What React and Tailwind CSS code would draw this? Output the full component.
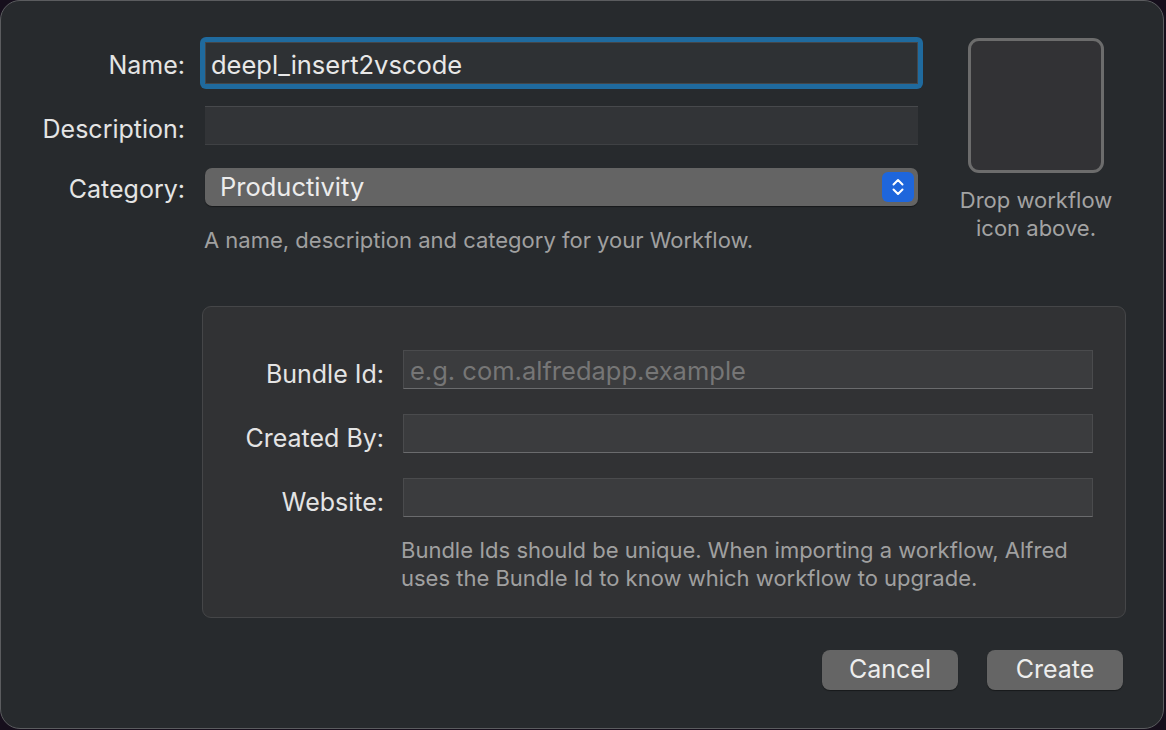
export default function App() {
  const font = { fontFamily: 'Inter, "Liberation Sans", sans-serif' }
  return (
    <div className="w-[1166px] h-[730px] bg-[#160f1c] overflow-hidden" style={font}>
      <div className="w-[1164px] h-[729px] rounded-[20px] border border-[#5b5c5f] bg-[#272a2d] flex flex-col">
        {/* top section */}
        <div className="flex pt-[36px]">
          <div className="flex flex-col w-[922px]">
            {/* Name */}
            <div className="flex items-center h-[52px]">
              <div className="w-[185px] text-right text-[25px] text-[#e4e4e4] pr-[1px] pt-[6px]">Name:</div>
              <div className="ml-[14px] w-[723px] h-[52px] rounded-[6px] bg-[#1f6a9e] p-[5px]">
                <div className="h-full bg-[#2e3134] border border-[#44474a] flex items-center pl-[5px] pt-[4px] text-[25.5px] text-[#e8e8e8]">
                  deepl_insert2vscode
                </div>
              </div>
            </div>
            {/* Description */}
            <div className="flex items-center mt-[17px] h-[39px]">
              <div className="w-[185px] text-right text-[25px] text-[#e4e4e4] pr-[1px] pt-[8px] whitespace-nowrap">Description:</div>
              <div className="ml-[19px] w-[713px] h-[39px] bg-[#323437] border-t border-[#47494c] border-b border-b-[#3f4144]" />
            </div>
            {/* Category */}
            <div className="flex items-center mt-[23px] h-[38px]">
              <div className="w-[185px] text-right text-[25px] text-[#e4e4e4] pr-[1px] pt-[5px]">Category:</div>
              <div className="ml-[19px] w-[713px] h-[38px] rounded-[7px] bg-[#646464] flex items-center justify-between pl-[15px] pr-[4px] shadow-[0_1px_1px_rgba(0,0,0,0.4)]">
                <span className="text-[25.5px] text-[#ececec]">Productivity</span>
                <div className="w-[32px] h-[30px] rounded-[6px] bg-[#1e66dc] flex items-center justify-center">
                  <svg width="14" height="20" viewBox="0 0 14 20" fill="none" stroke="#ffffff" strokeWidth="2" strokeLinecap="round" strokeLinejoin="round">
                    <path d="M2.5 7.5 L7 3 L11.5 7.5" />
                    <path d="M2.5 12.5 L7 17 L11.5 12.5" />
                  </svg>
                </div>
              </div>
            </div>
            <div className="ml-[203px] mt-[18px] text-[22px] text-[#a0a0a0] whitespace-nowrap">
              A name, description and category for your Workflow.
            </div>
          </div>
          {/* icon well */}
          <div className="ml-[45px] flex flex-col items-center w-[136px] pt-[1px]">
            <div className="w-[136px] h-[135px] rounded-[11px] border-[3px] border-[#6c6c6c] bg-[#323235]" />
            <div className="mt-[13px] text-[22px] leading-[28px] text-[#a3a3a3] text-center whitespace-nowrap">
              Drop workflow
              <br />
              icon above.
            </div>
          </div>
        </div>

        {/* bundle box */}
        <div className="ml-[201px] mt-[49px] w-[924px] h-[312px] rounded-[9px] border border-[#454648] bg-[#313234] flex flex-col pt-[43px]">
          {[
            ['Bundle Id:', 'e.g. com.alfredapp.example'],
            ['Created By:', ''],
            ['Website:', ''],
          ].map(([label, ph], i) => (
            <div key={label} className={`flex items-center h-[39px] ${i > 0 ? 'mt-[25px]' : ''}`}>
              <div className="w-[181px] text-right text-[25px] text-[#e4e4e4] pt-[10px] whitespace-nowrap">{label}</div>
              <div className="ml-[19px] w-[690px] h-[39px] bg-[#3b3c3e] border border-[#4a4b4d] border-b-[#6a6b6d] flex items-center pl-[6px] pt-[4px] text-[25.5px] text-[#767676]">
                {ph}
              </div>
            </div>
          ))}
          <div className="ml-[198px] mt-[19px] text-[22px] leading-[28px] text-[#a0a0a0] whitespace-nowrap">
            Bundle Ids should be unique. When importing a workflow, Alfred
            <br />
            uses the Bundle Id to know which workflow to upgrade.
          </div>
        </div>

        {/* buttons */}
        <div className="flex justify-end gap-[29px] mt-[32px] pr-[40px]">
          <button className="w-[136px] h-[40px] rounded-[8px] bg-[#656565] text-[25px] text-[#ededed] shadow-[0_1px_1px_rgba(0,0,0,0.4)]">
            Cancel
          </button>
          <button className="w-[136px] h-[40px] rounded-[8px] bg-[#656565] text-[25px] text-[#ededed] shadow-[0_1px_1px_rgba(0,0,0,0.4)]">
            Create
          </button>
        </div>
      </div>
    </div>
  )
}
